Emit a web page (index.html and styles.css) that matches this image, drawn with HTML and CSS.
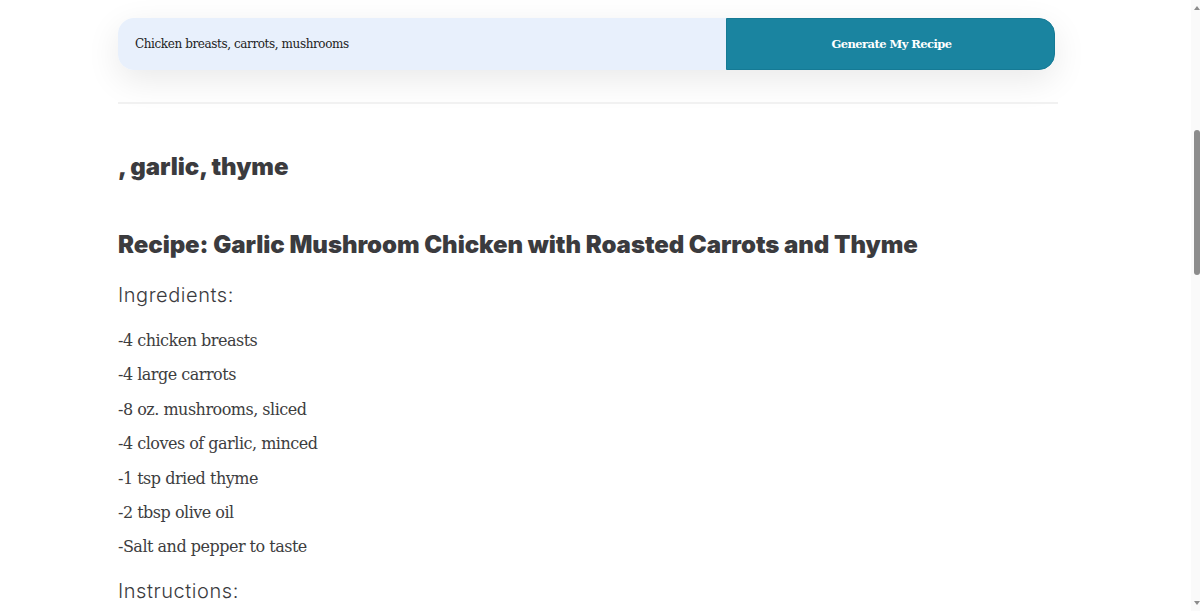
FILE: index.html
```html
<!DOCTYPE html>
<html lang="en">
<head>
<meta charset="utf-8">
<title>Recipe Generator</title>
<link rel="stylesheet" href="styles.css">
</head>
<body>
<div class="page">
  <main class="main">
    <form class="gen-form">
      <input class="gen-input" type="text" value="Chicken breasts, carrots, mushrooms">
      <button class="gen-btn" type="button">Generate My Recipe</button>
    </form>
    <hr class="divider">
    <section class="result">
      <h2 class="h-big">, garlic, thyme</h2>
      <h2 class="h-big h-recipe">Recipe: Garlic Mushroom Chicken with Roasted Carrots and Thyme</h2>
      <h3 class="h-sub">Ingredients:</h3>
      <p class="item">-4 chicken breasts</p>
      <p class="item">-4 large carrots</p>
      <p class="item">-8 oz. mushrooms, sliced</p>
      <p class="item">-4 cloves of garlic, minced</p>
      <p class="item">-1 tsp dried thyme</p>
      <p class="item">-2 tbsp olive oil</p>
      <p class="item">-Salt and pepper to taste</p>
      <h3 class="h-sub h-last">Instructions:</h3>
      <p class="item">1. Preheat oven to 400°F.</p>
      <p class="item">2. Peel and slice carrots into 1/4 inch thick pieces.</p>
      <p class="item">3. Place carrots on a baking sheet and toss with 1 tbsp of olive oil, salt and pepper.</p>
      <p class="item">4. Roast carrots in preheated oven for 20 minutes.</p>
      <p class="item">5. Meanwhile, season chicken breasts with salt, pepper and dried thyme.</p>
      <p class="item">6. Heat remaining olive oil in a large skillet over medium-high heat.</p>
      <p class="item">7. Add chicken breasts to skillet and cook for 5-6 minutes per side, or until cooked through.</p>
      <p class="item">8. Remove chicken from skillet and set aside.</p>
      <p class="item">9. Add mushrooms and garlic to skillet and cook for 5 minutes, stirring occasionally.</p>
      <p class="item">10. Return chicken to skillet and spoon mushrooms over top.</p>
      <p class="item">11. Serve chicken with roasted carrots and enjoy!</p>
    </section>
  </main>
</div>
<div class="scrollbar" aria-hidden="true">
  <span class="sb-arrow sb-up"></span>
  <span class="sb-thumb"></span>
  <span class="sb-arrow sb-down"></span>
</div>
</body>
</html>
```

FILE: styles.css
```css
html, body {
  margin: 0;
  padding: 0;
  background: #ffffff;
}
body {
  display: flex;
  height: 611px;
  overflow: hidden;
  font-family: "DejaVu Serif", "Liberation Serif", serif;
  color: #3d3d40;
}
.page {
  flex: 1;
  min-width: 0;
  height: 611px;
  overflow: hidden;
}
.main {
  width: 940px;
  margin-left: 118px;
  padding-top: 18px;
}
.gen-form {
  display: flex;
  width: 937px;
  height: 52px;
  margin: 0;
  border-radius: 16px;
  box-shadow: 0 10px 34px rgba(0, 0, 0, 0.09);
}
.gen-input {
  flex: 0 0 608px;
  box-sizing: border-box;
  height: 52px;
  border: none;
  outline: none;
  background: #e8f0fc;
  border-radius: 16px 0 0 16px;
  padding: 0 0 0 17px;
  font-family: "DejaVu Serif", "Liberation Serif", serif;
  font-size: 12px;
  letter-spacing: -0.4px;
  color: #222;
}
.gen-btn {
  flex: 1;
  height: 52px;
  box-sizing: border-box;
  border: 1px solid #157a95;
  background: #1a84a0;
  color: #ffffff;
  border-radius: 0 16px 16px 0;
  font-family: "DejaVu Serif", "Liberation Serif", serif;
  font-weight: bold;
  font-size: 11.5px;
  letter-spacing: -0.55px;
  padding: 0 0 0 2px;
}
.divider {
  margin: 32px 0 0;
  border: none;
  height: 2px;
  background: #f1f1f1;
}
.result {
  padding-top: 46px;
}
.h-big {
  margin: 0;
  font-family: Inter, "Noto Sans", sans-serif;
  font-weight: 900;
  font-size: 24px;
  letter-spacing: -0.06px;
  line-height: 34px;
  color: #3b3b3e;
}
.h-recipe {
  margin-top: 44px;
}
.h-sub {
  margin: 18px 0 19px;
  font-family: Inter, "Noto Sans", sans-serif;
  font-weight: 300;
  font-size: 20px;
  letter-spacing: 0.55px;
  line-height: 30px;
  color: #3b3b3e;
}
.h-last {
  margin-top: 16px;
}
.item {
  margin: 0 0 10px;
  font-size: 16px;
  letter-spacing: -0.5px;
  line-height: 24.4px;
  color: #3d3d40;
}
.scrollbar {
  flex: 0 0 9px;
  height: 611px;
  background: #fafafa;
  display: flex;
  flex-direction: column;
  align-items: flex-end;
}
.sb-arrow {
  display: block;
  width: 0;
  height: 0;
  border-left: 3px solid transparent;
  border-right: 3px solid transparent;
}
.sb-up {
  margin-top: 6px;
  border-bottom: 4px solid #8c8c8c;
}
.sb-thumb {
  display: block;
  width: 6px;
  height: 145px;
  margin-top: 120px;
  background: #8c8c8c;
  border-radius: 3px;
}
.sb-down {
  margin-top: auto;
  margin-bottom: 6px;
  border-top: 4px solid #8c8c8c;
}
```
